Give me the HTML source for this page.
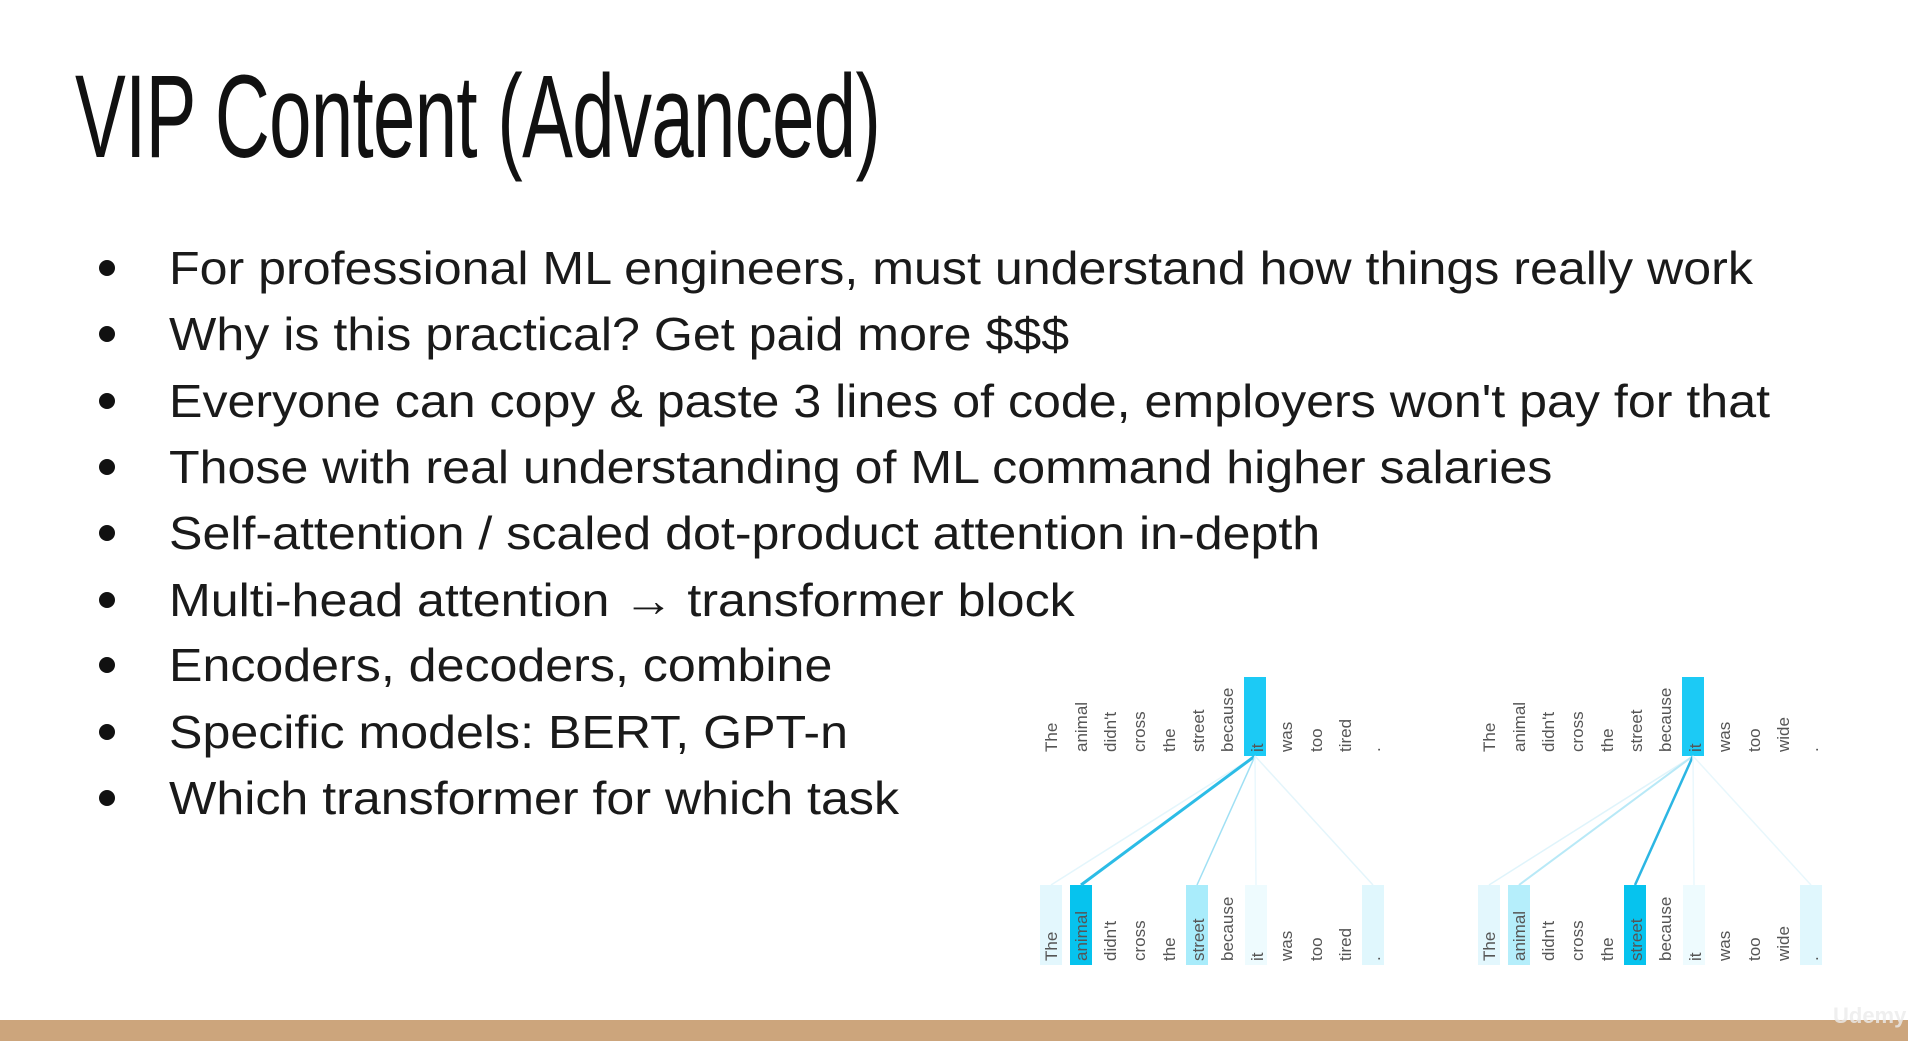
<!DOCTYPE html>
<html><head><meta charset="utf-8"><style>
html,body{margin:0;padding:0;background:#fff;width:1908px;height:1041px;overflow:hidden;position:relative;font-family:"Liberation Sans",sans-serif}
.title{position:absolute;left:75px;top:52px;font-size:118px;line-height:130px;color:#111;white-space:nowrap;transform:scaleX(0.645);transform-origin:0 0;letter-spacing:-1px}
.b{position:absolute;left:169px;font-size:46px;color:#1a1a1a;white-space:nowrap;transform:scaleX(1.09);transform-origin:0 0;line-height:60px}
.dot{position:absolute;left:99px;width:16px;height:16px;border-radius:50%;background:#111}
.bar{position:absolute;left:0;top:1020px;width:1908px;height:21px;background:#cca57c}
.wm{position:absolute;left:1833px;top:1003px;font-size:22px;color:rgba(235,235,235,0.8);font-weight:bold}
svg{position:absolute;left:0;top:0}
</style></head><body>
<div class="title">VIP Content (Advanced)</div>

<div class="dot" style="top:260px"></div><div class="b" style="top:238px">For professional ML engineers, must understand how things really work</div>
<div class="dot" style="top:326px"></div><div class="b" style="top:304px">Why is this practical? Get paid more $$$</div>
<div class="dot" style="top:393px"></div><div class="b" style="top:371px">Everyone can copy &amp; paste 3 lines of code, employers won't pay for that</div>
<div class="dot" style="top:459px"></div><div class="b" style="top:437px">Those with real understanding of ML command higher salaries</div>
<div class="dot" style="top:525px"></div><div class="b" style="top:503px">Self-attention / scaled dot-product attention in-depth</div>
<div class="dot" style="top:592px"></div><div class="b" style="top:570px">Multi-head attention → transformer block</div>
<div class="dot" style="top:657px"></div><div class="b" style="top:635px">Encoders, decoders, combine</div>
<div class="dot" style="top:724px"></div><div class="b" style="top:702px">Specific models: BERT, GPT-n</div>
<div class="dot" style="top:790px"></div><div class="b" style="top:768px">Which transformer for which task</div>

<svg width="1908" height="1041" xmlns="http://www.w3.org/2000/svg" font-family="Liberation Sans, sans-serif" font-size="17" fill="#555">
<g>
<rect x="1244" y="677" width="22" height="79" fill="#1ccaf5"/>
<rect x="1040" y="885" width="22" height="80" fill="#e3f7fd"/>
<rect x="1070" y="885" width="22" height="80" fill="#06c3ee"/>
<rect x="1186" y="885" width="22" height="80" fill="#a9ecfb"/>
<rect x="1245" y="885" width="22" height="80" fill="#eefbfe"/>
<rect x="1362" y="885" width="22" height="80" fill="#e0f7fd"/>
<line x1="1255" y1="756" x2="1051" y2="885" stroke="#e4f6fc" stroke-width="1.5"/>
<line x1="1255" y1="756" x2="1081" y2="885" stroke="#2cbce6" stroke-width="3"/>
<line x1="1255" y1="756" x2="1197" y2="885" stroke="#9fe0f4" stroke-width="1.5"/>
<line x1="1255" y1="756" x2="1256" y2="885" stroke="#eaf8fd" stroke-width="1.5"/>
<line x1="1255" y1="756" x2="1373" y2="885" stroke="#e4f5fb" stroke-width="1.5"/>
</g>
<g transform="translate(438,0)">
<rect x="1244" y="677" width="22" height="79" fill="#1ccaf5"/>
<rect x="1040" y="885" width="22" height="80" fill="#e3f7fd"/>
<rect x="1070" y="885" width="22" height="80" fill="#b5eefb"/>
<rect x="1186" y="885" width="22" height="80" fill="#06c3ee"/>
<rect x="1245" y="885" width="22" height="80" fill="#eefbfe"/>
<rect x="1362" y="885" width="22" height="80" fill="#e0f7fd"/>
<line x1="1255" y1="756" x2="1051" y2="885" stroke="#dff4fb" stroke-width="1.5"/>
<line x1="1255" y1="756" x2="1081" y2="885" stroke="#b8e9f7" stroke-width="2"/>
<line x1="1255" y1="756" x2="1197" y2="885" stroke="#2cb6e3" stroke-width="2.5"/>
<line x1="1255" y1="756" x2="1256" y2="885" stroke="#eaf8fd" stroke-width="1.5"/>
<line x1="1255" y1="756" x2="1373" y2="885" stroke="#e8f7fc" stroke-width="1.5"/>
</g>
<g>
<text transform="translate(1057,752) rotate(-90)">The</text>
<text transform="translate(1087,752) rotate(-90)">animal</text>
<text transform="translate(1116,752) rotate(-90)">didn't</text>
<text transform="translate(1145,752) rotate(-90)">cross</text>
<text transform="translate(1175,752) rotate(-90)">the</text>
<text transform="translate(1204,752) rotate(-90)">street</text>
<text transform="translate(1233,752) rotate(-90)">because</text>
<text transform="translate(1263,752) rotate(-90)">it</text>
<text transform="translate(1292,752) rotate(-90)">was</text>
<text transform="translate(1322,752) rotate(-90)">too</text>
<text transform="translate(1351,752) rotate(-90)">tired</text>
<text transform="translate(1380,752) rotate(-90)">.</text>
<text transform="translate(1057,961) rotate(-90)">The</text>
<text transform="translate(1087,961) rotate(-90)">animal</text>
<text transform="translate(1116,961) rotate(-90)">didn't</text>
<text transform="translate(1145,961) rotate(-90)">cross</text>
<text transform="translate(1175,961) rotate(-90)">the</text>
<text transform="translate(1204,961) rotate(-90)">street</text>
<text transform="translate(1233,961) rotate(-90)">because</text>
<text transform="translate(1263,961) rotate(-90)">it</text>
<text transform="translate(1292,961) rotate(-90)">was</text>
<text transform="translate(1322,961) rotate(-90)">too</text>
<text transform="translate(1351,961) rotate(-90)">tired</text>
<text transform="translate(1380,961) rotate(-90)">.</text>
</g>
<g transform="translate(438,0)">
<text transform="translate(1057,752) rotate(-90)">The</text>
<text transform="translate(1087,752) rotate(-90)">animal</text>
<text transform="translate(1116,752) rotate(-90)">didn't</text>
<text transform="translate(1145,752) rotate(-90)">cross</text>
<text transform="translate(1175,752) rotate(-90)">the</text>
<text transform="translate(1204,752) rotate(-90)">street</text>
<text transform="translate(1233,752) rotate(-90)">because</text>
<text transform="translate(1263,752) rotate(-90)">it</text>
<text transform="translate(1292,752) rotate(-90)">was</text>
<text transform="translate(1322,752) rotate(-90)">too</text>
<text transform="translate(1351,752) rotate(-90)">wide</text>
<text transform="translate(1380,752) rotate(-90)">.</text>
<text transform="translate(1057,961) rotate(-90)">The</text>
<text transform="translate(1087,961) rotate(-90)">animal</text>
<text transform="translate(1116,961) rotate(-90)">didn't</text>
<text transform="translate(1145,961) rotate(-90)">cross</text>
<text transform="translate(1175,961) rotate(-90)">the</text>
<text transform="translate(1204,961) rotate(-90)">street</text>
<text transform="translate(1233,961) rotate(-90)">because</text>
<text transform="translate(1263,961) rotate(-90)">it</text>
<text transform="translate(1292,961) rotate(-90)">was</text>
<text transform="translate(1322,961) rotate(-90)">too</text>
<text transform="translate(1351,961) rotate(-90)">wide</text>
<text transform="translate(1380,961) rotate(-90)">.</text>
</g>
</svg>
<div class="bar"></div>
<div class="wm">Udemy</div>
</body></html>
